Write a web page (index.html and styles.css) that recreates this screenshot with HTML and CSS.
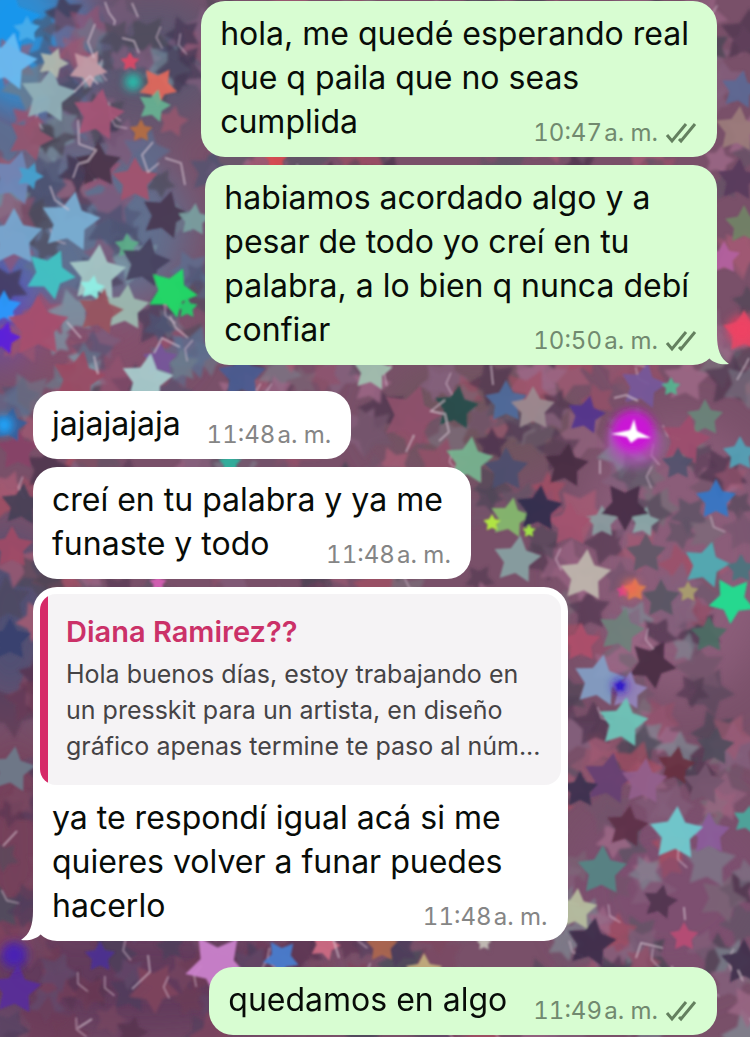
FILE: index.html
```
<!DOCTYPE html>
<html lang="es">

<head>
    <meta charset="UTF-8">
    <meta name="viewport" content="width=device-width, initial-scale=1.0">
    <title>Chat</title>
    <link rel="stylesheet" href="styles.css">
</head>

<body>
    <svg class="wallpaper" viewBox="0 0 750 1037" preserveAspectRatio="xMidYMid slice" aria-hidden="true">
        <defs>
            <filter id="soft"><feGaussianBlur stdDeviation="1" /></filter>
            <filter id="blurry"><feGaussianBlur stdDeviation="1.8" /></filter>
            <filter id="haze" x="-50%" y="-50%" width="200%" height="200%"><feGaussianBlur stdDeviation="22" /></filter>
            <filter id="glow" x="-50%" y="-50%" width="200%" height="200%"><feGaussianBlur stdDeviation="5" /></filter>
        </defs>
        <rect width="750" height="1037" fill="#795069" />
        <g filter="url(#haze)">
            <ellipse cx="20" cy="40" rx="60" ry="80" fill="#2c8fd6" />
            <ellipse cx="150" cy="60" rx="80" ry="70" fill="#5d5670" />
            <ellipse cx="80" cy="230" rx="110" ry="90" fill="#60708f" />
            <ellipse cx="0" cy="310" rx="26" ry="50" fill="#3b49d8" />
            <ellipse cx="90" cy="340" rx="90" ry="40" fill="#85506c" />
            <ellipse cx="10" cy="620" rx="40" ry="90" fill="#4b4f75" />
            <ellipse cx="15" cy="850" rx="50" ry="110" fill="#743f5a" />
            <ellipse cx="140" cy="980" rx="170" ry="60" fill="#623b5b" />
            <ellipse cx="480" cy="420" rx="100" ry="60" fill="#70545f" />
            <ellipse cx="680" cy="560" rx="100" ry="140" fill="#8b5d79" />
            <ellipse cx="670" cy="890" rx="100" ry="90" fill="#7d4f6f" />
        </g>
        <g id="backStars" filter="url(#blurry)"></g>
        <g id="frontStars" filter="url(#soft)"></g>
        <g filter="url(#glow)">
            <ellipse cx="634" cy="444" rx="28" ry="24" fill="#b050b8" opacity="0.6" />
            <circle cx="633" cy="432" r="22" fill="#cb14d6" />
            <circle cx="620" cy="686" r="7" fill="#2d16c9" />
            <circle cx="133" cy="82" r="8" fill="#20c9b3" />
            <circle cx="631" cy="588" r="8" fill="#ef6a52" />
            <circle cx="4" cy="425" r="9" fill="#1ba8ff" />
            <circle cx="14" cy="955" r="13" fill="#4a22b4" />
            <circle cx="742" cy="330" r="14" fill="#ee4263" />
        </g>
        <path d="M611 434l19-4 4-11 3 12 14 7-13 0-7 5-4-6z" fill="#fff" filter="url(#soft)" />
    </svg>

    <main class="chat">
        <div class="message sent">
            <p class="text">hola, me quedé esperando real<br>que q paila que no seas<br>cumplida
                <span class="meta"><time>10:47&#8202;a. m.</time>
                    <svg class="checks" viewBox="0 0 32 22"><path d="M2 13l5 6L21 2M14 17l2 2L30 2" /></svg>
                </span>
            </p>
        </div>

        <div class="message sent last">
            <p class="text">habiamos acordado algo y a<br>pesar de todo yo creí en tu<br>palabra, a lo bien q nunca debí<br>confiar
                <span class="meta"><time>10:50&#8202;a. m.</time>
                    <svg class="checks" viewBox="0 0 32 22"><path d="M2 13l5 6L21 2M14 17l2 2L30 2" /></svg>
                </span>
            </p>
            <svg class="tail" viewBox="0 0 32 30"><path d="M20 0C20 14 23 23 32 29C24 30 17 28 13 24L0 10L10 0Z" /></svg>
        </div>

        <div class="message received">
            <p class="text">jajajajaja
                <span class="meta"><time>11:48&#8202;a. m.</time></span>
            </p>
        </div>

        <div class="message received">
            <p class="text">creí en tu palabra y ya me<br>funaste y todo
                <span class="meta"><time>11:48&#8202;a. m.</time></span>
            </p>
        </div>

        <div class="message received last">
            <blockquote class="quote">
                <strong class="quote-name">Diana Ramirez??</strong>
                <p class="quote-text">Hola buenos días, estoy trabajando en<br>un presskit para un artista, en diseño<br>gráfico apenas termine te paso al núm...</p>
            </blockquote>
            <p class="text">ya te respondí igual acá si me<br>quieres volver a funar puedes<br>hacerlo
                <span class="meta"><time>11:48&#8202;a. m.</time></span>
            </p>
            <svg class="tail" viewBox="0 0 32 30"><path d="M20 0C20 14 23 23 32 29C24 30 17 28 13 24L0 10L10 0Z" /></svg>
        </div>

        <div class="message sent">
            <p class="text">quedamos en algo
                <span class="meta"><time>11:49&#8202;a. m.</time>
                    <svg class="checks" viewBox="0 0 32 22"><path d="M2 13l5 6L21 2M14 17l2 2L30 2" /></svg>
                </span>
            </p>
        </div>
    </main>

    <script src="wallpaper.js"></script>
</body>

</html>
```
FILE: styles.css
```
* {
    margin: 0;
    padding: 0;
    box-sizing: border-box;
}

body {
    font-family: Inter, "Liberation Sans", sans-serif;
    background-color: #795069;
    color: #080c08;
    min-height: 100vh;
    overflow-x: hidden;
}

.wallpaper {
    position: fixed;
    top: 0;
    left: 0;
    width: 100%;
    height: 100%;
    z-index: -1;
}

.chat {
    display: flex;
    flex-direction: column;
    gap: 8px;
    padding: 1px 33px 2px;
}

.message {
    position: relative;
    border-radius: 24px;
    white-space: nowrap;
}

.sent {
    align-self: flex-end;
    background-color: #d8fdd2;
    fill: #d8fdd2;
}

.received {
    align-self: flex-start;
    background-color: #fff;
    fill: #fff;
}

/* hueco entre un grupo de mensajes y el siguiente */
.last {
    margin-bottom: 18px;
}

.text {
    padding: 11px 28px 13px 19px;
    font-size: 32px;
    line-height: 44px;
}

.meta {
    float: right;
    display: flex;
    align-items: center;
    gap: 7px;
    margin: 22px -8px 0 26px;
    height: 22px;
    font-size: 24px;
    font-variant-numeric: tabular-nums;
    line-height: 22px;
    color: #858585;
}

.sent .meta {
    color: #71896f;
}

.checks {
    width: 32px;
    height: 22px;
    fill: none;
    stroke: #64805f;
    stroke-width: 3;
}

.tail {
    position: absolute;
    bottom: 0;
    right: -12px;
    width: 32px;
    height: 30px;
}

.received .tail {
    right: auto;
    left: -12px;
    transform: scaleX(-1);
}

.quote {
    margin: 7px 7px 0;
    padding: 20px 20px 21px 26px;
    border-radius: 16px;
    background: linear-gradient(to right, #d62a68 8px, #f5f3f5 8px);
}

.quote-name {
    display: block;
    margin-bottom: 6px;
    font-size: 29px;
    font-weight: 600;
    line-height: 36px;
    color: #cb3168;
}

.quote-text {
    font-size: 25px;
    line-height: 36px;
    color: #454345;
}
```
FILE: wallpaper.js
```
const SVG_NS = 'http://www.w3.org/2000/svg';
const backStars = document.getElementById('backStars');
const frontStars = document.getElementById('frontStars');

// Generador con semilla para que el fondo sea siempre el mismo
let seed = 4711;
function random() {
    seed = (seed * 16807) % 2147483647;
    return seed / 2147483647;
}

function starPoints(x, y, r, angle) {
    const points = [];
    for (let i = 0; i < 10; i++) {
        const radius = i % 2 ? r * 0.53 : r;
        const a = (angle + i * 36 - 90) * Math.PI / 180;
        points.push((x + radius * Math.cos(a)).toFixed(1) + ',' + (y + radius * Math.sin(a)).toFixed(1));
    }
    return points.join(' ');
}

function addStar(group, x, y, r, angle, color, opacity) {
    const star = document.createElementNS(SVG_NS, 'polygon');
    star.setAttribute('points', starPoints(x, y, r, angle));
    star.setAttribute('fill', color);
    star.setAttribute('opacity', opacity);
    group.appendChild(star);
    return star;
}

const cool = ['#5c6f91', '#4d5272', '#7d5c7c', '#9a5270', '#6d7b8c', '#443954', '#7d9aa8', '#a1576e', '#4d4a5a'];
const warm = ['#925069', '#a25a73', '#72546b', '#4f364f', '#84607c', '#9c6786', '#5f5365', '#a24e63', '#7f8490', '#7a6b78', '#4c4555'];
const dark = ['#6d3b56', '#56324f', '#7a4861', '#4d3d5b', '#80445e', '#624869', '#4c4c5c'];

for (let i = 0; i < 900; i++) {
    const x = random() * 750;
    const y = random() * 1037;
    let palette = warm;
    if (x < 220 && y < 420) palette = cool;
    if (x < 450 && y > 640) palette = dark;
    const color = palette[Math.floor(random() * palette.length)];
    addStar(backStars, x, y, 15 + random() * 14, random() * 72, color, 0.5 + random() * 0.4);
    // brillo en el borde de algunas estrellas
    if (i % 8 === 0) {
        const edge = addStar(frontStars, x, y, 18, random() * 72, 'none', 0.6);
        edge.setAttribute('stroke', '#d9bfd0');
        edge.setAttribute('stroke-width', 1.5);
        edge.setAttribute('stroke-dasharray', '24 130');
    }
}

// x, y, radio, giro, color
const bright = [
    [5, 20, 36, 10, '#1997ee'],
    [8, 62, 30, 12, '#69bdf4'],
    [27, 30, 14, 0, '#4aaeea'],
    [48, 96, 29, 8, '#91b1b9'],
    [53, 63, 16, 20, '#b4bcb0'],
    [88, 68, 20, 30, '#c69aa5'],
    [98, 115, 27, 10, '#a65576'],
    [130, 62, 10, 0, '#dc4866'],
    [158, 86, 20, 35, '#e4685b'],
    [154, 106, 17, 15, '#67b393'],
    [141, 131, 12, 0, '#b56c42'],
    [30, 138, 24, 20, '#95546f'],
    [15, 178, 28, 15, '#6f88b8'],
    [30, 176, 14, 20, '#43a1ce'],
    [98, 165, 24, 0, '#473449'],
    [135, 181, 24, 0, '#a4536e'],
    [70, 222, 31, 10, '#7bb0d5'],
    [14, 238, 30, 0, '#76a9d3'],
    [165, 215, 25, 15, '#473650'],
    [194, 220, 17, 5, '#799f9f'],
    [127, 246, 13, 0, '#5cae88'],
    [145, 263, 26, 12, '#45405d'],
    [50, 274, 26, 25, '#3fc6c5'],
    [97, 274, 30, 5, '#a7cac8'],
    [92, 288, 13, 10, '#8ff0e5'],
    [172, 292, 26, 25, '#1de065'],
    [187, 308, 11, 0, '#25cf69'],
    [126, 308, 24, 5, '#9dbcb1'],
    [4, 308, 18, 0, '#289bff'],
    [4, 338, 17, 15, '#5a20dd'],
    [38, 327, 32, 0, '#a64f6e'],
    [100, 312, 24, 12, '#98545f'],
    [160, 360, 18, 0, '#77559a'],
    [147, 380, 27, 8, '#a9cfcf'],
    [78, 378, 28, 12, '#9a4963'],
    [242, 376, 25, 0, '#4b5c93'],
    [276, 159, 13, 0, '#d94a50'],
    [230, 463, 12, 0, '#2ab29d'],
    [372, 371, 21, 8, '#a1c1b0'],
    [411, 415, 31, 18, '#8e506b'],
    [456, 408, 23, 8, '#244d49'],
    [506, 402, 22, 0, '#4e6b9c'],
    [533, 409, 23, 0, '#9c8b90'],
    [586, 415, 20, 12, '#51348e'],
    [643, 386, 24, 12, '#75589b'],
    [671, 387, 10, 0, '#54b590'],
    [705, 418, 19, 0, '#698579'],
    [685, 440, 26, 12, '#9e4d6e'],
    [469, 461, 25, 7, '#76b590'],
    [506, 470, 23, 0, '#4c4f6f'],
    [566, 466, 23, 7, '#482a42'],
    [740, 454, 18, 0, '#53a3b7'],
    [678, 464, 17, 0, '#51536d'],
    [716, 500, 21, 0, '#3377c8'],
    [602, 522, 17, 0, '#8a9da1'],
    [644, 522, 16, 10, '#8ba9a9'],
    [625, 506, 25, 36, '#452b45'],
    [570, 525, 23, 0, '#a2536f'],
    [510, 518, 21, 10, '#86bb6c'],
    [492, 523, 9, 0, '#b5f13f'],
    [529, 531, 7, 0, '#a5ed45'],
    [539, 509, 24, 5, '#302a4c'],
    [517, 560, 25, 8, '#88a2a3'],
    [585, 576, 27, 5, '#bfb7ae'],
    [646, 554, 21, 0, '#5f5967'],
    [706, 565, 24, 15, '#4faeb5'],
    [741, 569, 15, 0, '#49747e'],
    [661, 599, 20, 0, '#595763'],
    [732, 600, 24, 40, '#21e391'],
    [635, 590, 12, 0, '#dc804e'],
    [623, 591, 7, 0, '#dc3a91'],
    [688, 592, 11, 0, '#aaa06d'],
    [621, 631, 24, 12, '#6c817b'],
    [709, 635, 19, 0, '#4c6c64'],
    [581, 643, 20, 0, '#ae4f6a'],
    [652, 664, 25, 28, '#482a42'],
    [599, 681, 27, 10, '#82a0c6'],
    [628, 691, 20, 8, '#9585bd'],
    [620, 686, 6, 0, '#2f19c6'],
    [623, 723, 26, 8, '#6dc8bb'],
    [715, 747, 20, 5, '#504d5c'],
    [676, 766, 20, 8, '#683040'],
    [609, 779, 27, 10, '#654073'],
    [644, 782, 24, 5, '#925e8c'],
    [580, 790, 19, 0, '#39304e'],
    [704, 785, 22, 5, '#75566f'],
    [627, 827, 22, 8, '#5d3048'],
    [709, 834, 22, 0, '#8b5c9b'],
    [676, 834, 28, 3, '#6fced1'],
    [747, 820, 15, 12, '#4ba99d'],
    [602, 871, 26, 2, '#548584'],
    [576, 910, 22, 5, '#b7bf9f'],
    [660, 902, 18, 12, '#50334f'],
    [591, 943, 26, 10, '#3e2d4b'],
    [684, 937, 15, 0, '#b94c74'],
    [744, 963, 24, 0, '#40304d'],
    [424, 972, 19, 0, '#c4b07d'],
    [484, 943, 8, 0, '#c6c1b9'],
    [382, 946, 17, 0, '#ad674e'],
    [217, 965, 33, 38, '#cd83cf'],
    [281, 958, 19, 40, '#487fd1'],
    [325, 945, 16, 20, '#cf6b83'],
    [16, 990, 26, 5, '#592e9b'],
    [100, 957, 16, 0, '#4c3193'],
    [12, 770, 24, 8, '#6c7c8b'],
    [10, 640, 22, 0, '#37416f'],
    [22, 505, 22, 5, '#444057'],
    [12, 548, 22, 0, '#a04b65'],
    [18, 450, 22, 0, '#884367'],
    [10, 425, 18, 10, '#385e9b'],
    [158, 583, 9, 0, '#d860b6'],
    [738, 130, 24, 5, '#9b7c7b'],
    [740, 90, 20, 10, '#5b6895'],
    [724, 258, 17, 0, '#b362a0'],
    [744, 225, 20, 0, '#718366'],
    [744, 332, 22, 0, '#df4b67'],
    [738, 180, 22, 5, '#58395c']
];
bright.forEach(([x, y, r, angle, color]) => addStar(frontStars, x, y, r, angle, color, 0.92));

// filamentos claros entre las estrellas
const lines = [
    'M105 2l4 11 6 8-1 4', 'M132 3l6 14', 'M95 24l-7 18 6 16', 'M122 38l12 3 5 12',
    'M74 92l16-16 8 8', 'M78 120l1 24 17 6-8 11-10 3-5 14', 'M153 142l-11 13 6 17 11-9',
    'M50 186l5 14 14 10', 'M165 158l16 5 4 22', 'M67 322l14 16', 'M170 316l6 12 12 10',
    'M154 353l8-15 18 9', 'M94 356l4 18', 'M445 400l-14 11 14 3 4 18-10 9',
    'M491 365l2 20', 'M406 452l8-17', 'M600 460v14', 'M614 398l12-3 12 6',
    'M3 846l14-15', 'M148 955l2 17-18 17', 'M78 1028l14-9', 'M333 938l6 20',
    'M636 958l5-15 22 5', 'M684 907l1 13', 'M672 966l2 12', 'M738 970l5 11',
    'M737 380l9-16 3-6'
];
lines.forEach((d) => {
    const path = document.createElementNS(SVG_NS, 'path');
    path.setAttribute('d', d);
    path.setAttribute('fill', 'none');
    path.setAttribute('stroke', '#d8c6d2');
    path.setAttribute('stroke-width', 1.5);
    path.setAttribute('opacity', 0.8);
    frontStars.appendChild(path);
});
```
